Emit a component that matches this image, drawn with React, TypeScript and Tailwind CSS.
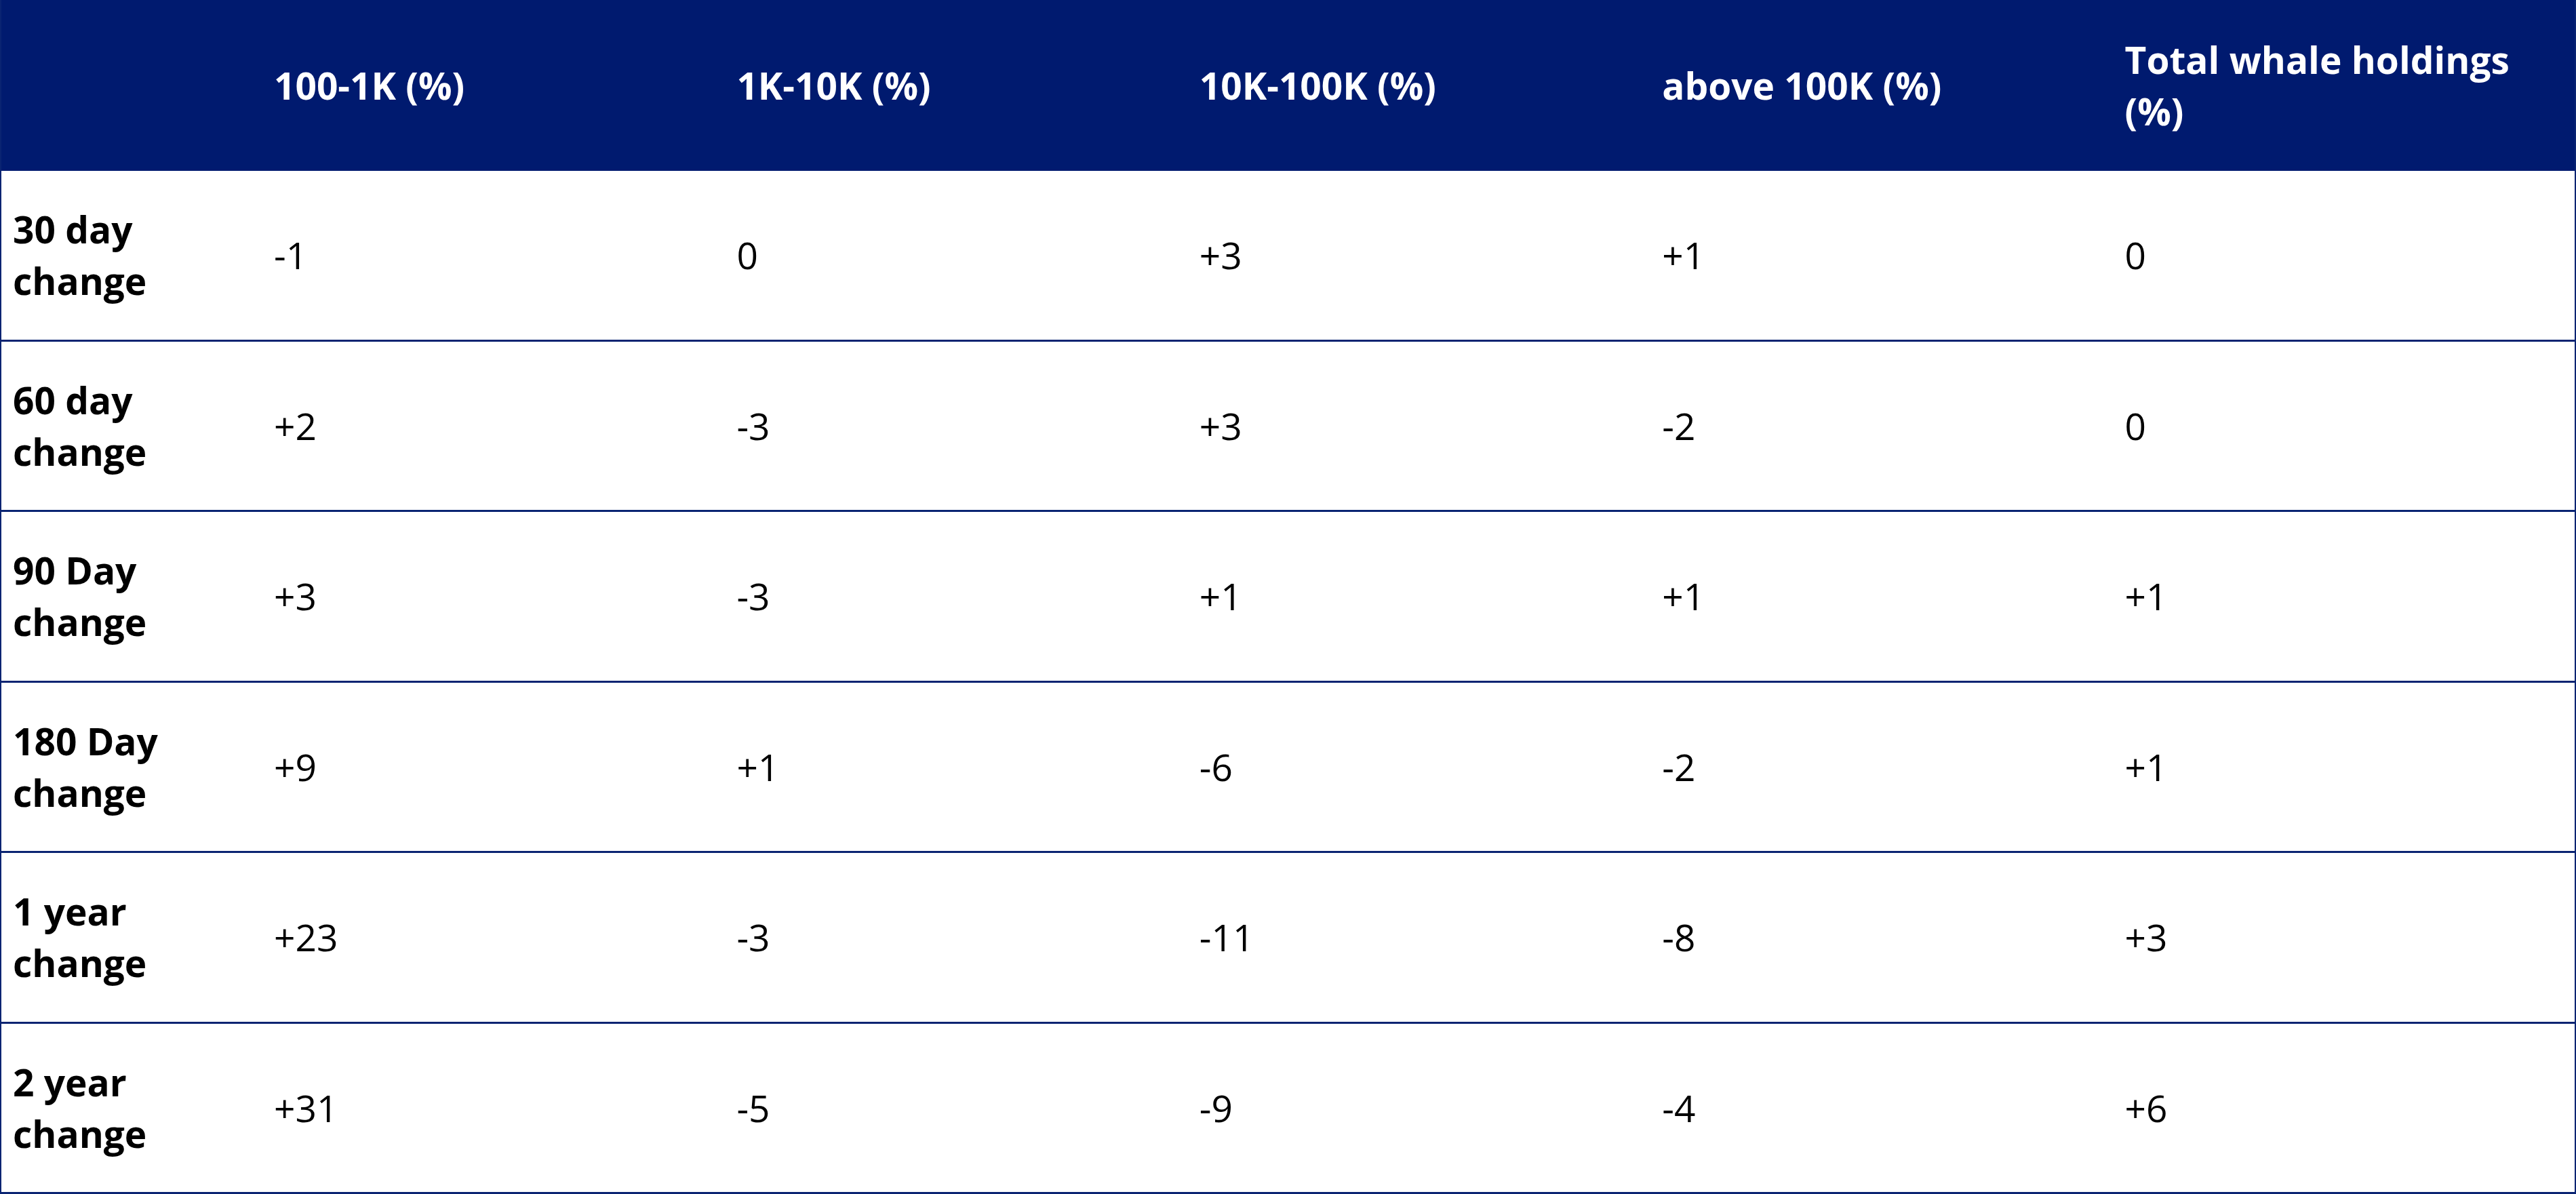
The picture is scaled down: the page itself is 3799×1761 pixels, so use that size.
const headers = ['100-1K (%)', '1K-10K (%)', '10K-100K (%)', 'above 100K (%)', 'Total whale holdings (%)']

const rows: { label: string; values: string[] }[] = [
  { label: '30 day change', values: ['-1', '0', '+3', '+1', '0'] },
  { label: '60 day change', values: ['+2', '-3', '+3', '-2', '0'] },
  { label: '90 Day change', values: ['+3', '-3', '+1', '+1', '+1'] },
  { label: '180 Day change', values: ['+9', '+1', '-6', '-2', '+1'] },
  { label: '1 year change', values: ['+23', '-3', '-11', '-8', '+3'] },
  { label: '2 year change', values: ['+31', '-5', '-9', '-4', '+6'] },
]

export default function App() {
  return (
    <div
      className="w-[3799px] h-[1761px] bg-white text-black"
      style={{ fontFamily: '"Open Sans", "Noto Sans", sans-serif' }}
    >
      <div className="h-full grid grid-cols-[383px_repeat(5,1fr)] grid-rows-[252px_repeat(6,1fr)] border-x-2 border-[#0a2472] text-[55px] leading-[76px]">
        {/* Header */}
        <div className="bg-[#001a6f]" />
        {headers.map((h) => (
          <div key={h} className="bg-[#001a6f] flex items-center pl-[19px] pr-[30px] font-bold text-white">
            {h}
          </div>
        ))}

        {/* Body */}
        {rows.map((r) => (
          <div key={r.label} className="contents">
            <div className="flex items-center pl-[17px] pr-[100px] font-bold border-b-[3px] border-[#0a2472]">
              {r.label}
            </div>
            {r.values.map((v, i) => (
              <div key={i} className="flex items-center pl-[19px] border-b-[3px] border-[#0a2472]">
                {v}
              </div>
            ))}
          </div>
        ))}
      </div>
    </div>
  )
}
